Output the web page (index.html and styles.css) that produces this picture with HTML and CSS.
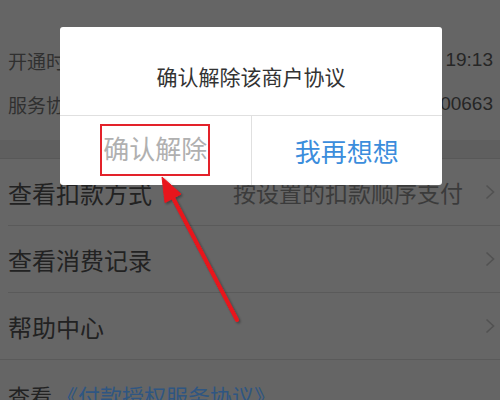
FILE: index.html
```html
<!DOCTYPE html>
<html lang="zh-CN">
<head>
<meta charset="utf-8">
<title>解除协议</title>
<link rel="stylesheet" href="styles.css">
</head>
<body>
<div class="page">
  <section class="info">
    <div class="info-row"><span class="info-label">开通时间</span><span class="info-value">2019-04-08 19:13</span></div>
    <div class="info-row"><span class="info-label">服务协议号</span><span class="info-value">20190408000110000663</span></div>
  </section>
  <div class="band"></div>
  <section class="list">
    <div class="list-item">
      <span class="item-title">查看扣款方式</span>
      <span class="item-extra">按设置的扣款顺序支付</span>
      <svg class="chevron" viewBox="0 0 10 16" width="10" height="16"><path d="M1.5 1.5 L8.5 8 L1.5 14.5" fill="none" stroke="currentColor" stroke-width="1.6"/></svg>
    </div>
    <div class="list-item">
      <span class="item-title">查看消费记录</span>
      <svg class="chevron" viewBox="0 0 10 16" width="10" height="16"><path d="M1.5 1.5 L8.5 8 L1.5 14.5" fill="none" stroke="currentColor" stroke-width="1.6"/></svg>
    </div>
    <div class="list-item list-item-last">
      <span class="item-title">帮助中心</span>
      <svg class="chevron" viewBox="0 0 10 16" width="10" height="16"><path d="M1.5 1.5 L8.5 8 L1.5 14.5" fill="none" stroke="currentColor" stroke-width="1.6"/></svg>
    </div>
  </section>
  <div class="agreement">查看<span class="agreement-link">《付款授权服务协议》</span></div>

  <div class="dialog">
    <div class="dialog-title">确认解除该商户协议</div>
    <div class="dialog-actions">
      <div class="dialog-btn btn-confirm"><span class="highlight">确认解除</span></div>
      <div class="dialog-btn btn-cancel">我再想想</div>
    </div>
  </div>

  <svg class="arrow" width="500" height="400" viewBox="0 0 500 400">
    <defs>
      <filter id="sh" x="-20%" y="-20%" width="140%" height="140%">
        <feDropShadow dx="1.5" dy="1.5" stdDeviation="1.2" flood-color="#000" flood-opacity="0.35"/>
      </filter>
    </defs>
    <g filter="url(#sh)" fill="#e8141c" stroke="#e8141c">
      <line x1="237" y1="320" x2="171" y2="194" stroke-width="4" stroke-linecap="round"/>
      <polygon points="162,177 181,194 165,202.5" stroke-width="1" stroke-linejoin="round"/>
    </g>
  </svg>
</div>
</body>
</html>
```

FILE: styles.css
```css
html, body {
  margin: 0;
  padding: 0;
}

body {
  background: #656565;
  font-family: "Liberation Sans", "Noto Sans CJK SC", sans-serif;
}

.page {
  position: relative;
  width: 500px;
  height: 400px;
  overflow: hidden;
  background: #656565;
}

.info {
  padding: 38px 7px 14px 8px;
}

.info-row {
  display: flex;
  justify-content: space-between;
  align-items: center;
  height: 44px;
  font-size: 19px;
}

.info-label {
  color: #303030;
}

.info-value {
  color: #262626;
}

.band {
  height: 18px;
  background: #5f5f5f;
  border-bottom: 1px solid #585858;
}

.list {
  background: #666666;
}

.list-item {
  display: flex;
  align-items: center;
  height: 66px;
  margin-left: 8px;
  padding-right: 5px;
  border-bottom: 1px solid #5a5a5a;
}

.list-item-last {
  margin-left: 0;
  padding-left: 8px;
}

.item-title {
  flex: 1;
  font-size: 24px;
  color: #222222;
}

.item-extra {
  font-size: 23px;
  color: #3b3b3b;
  margin-right: 22px;
}

.chevron {
  color: #525252;
  flex: none;
}

.agreement {
  padding: 25px 0 0 8px;
  font-size: 22px;
  line-height: 1.2;
  color: #222222;
}

.agreement-link {
  color: #2f5682;
  margin-left: 4px;
}

.dialog {
  position: absolute;
  left: 60px;
  top: 27px;
  width: 382px;
  height: 158px;
  background: #ffffff;
  border-radius: 3px;
  display: flex;
  flex-direction: column;
}

.dialog-title {
  padding: 36px 0 22px;
  line-height: 30px;
  font-size: 21px;
  color: #333333;
  text-align: center;
  border-bottom: 1px solid #e0e0e0;
}

.dialog-actions {
  flex: 1;
  display: flex;
}

.dialog-btn {
  flex: 1;
  display: flex;
  align-items: center;
  justify-content: center;
  font-size: 26px;
}

.btn-confirm {
  color: #b0b0b0;
  border-right: 1px solid #e0e0e0;
}

.btn-cancel {
  color: #3b8ddc;
}

.highlight {
  display: inline-block;
  width: 104px;
  line-height: 48px;
  padding: 0 1px;
  border: 2px solid #e3222a;
  text-align: center;
  margin-top: -2px;
}

.arrow {
  position: absolute;
  left: 0;
  top: 0;
  pointer-events: none;
}
```
